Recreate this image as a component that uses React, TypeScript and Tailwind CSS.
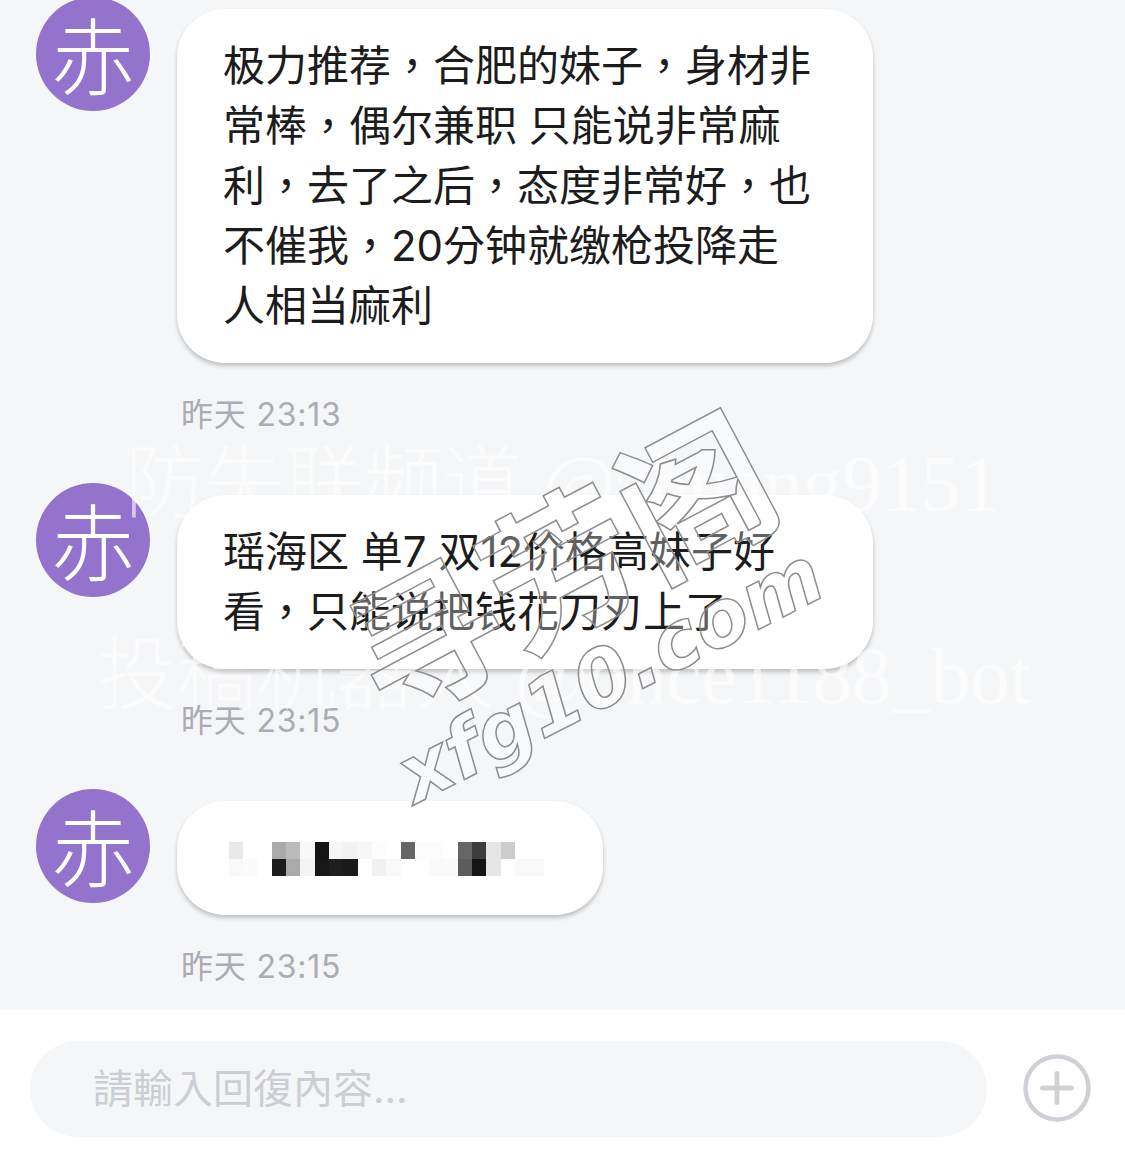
const mosaicTop = ["#e9e9e9","#fff","#fff","#aaa","#bbb","#f8f8f8","#151515","#f6f6f6","#f2f2f2","#f7f7f7","#fdfdfd","#fff","#666","#fcfcfc","#fcfcfc","#fff","#666","#3c3c3c","#e6e6e6","#ccc","#fff","#fff"];
const mosaicBottom = ["#f9f9f9","#fbfbfb","#fff","#1c1c1c","#aaa","#f4f4f4","#171717","#1e1e1e","#1a1a1a","#fff","#f1f1f1","#f9f9f9","#fff","#fff","#fafafa","#fafafa","#5c5c5c","#141414","#e6e6e6","#fff","#f9f9f9","#f9f9f9"];

function Avatar() {
  return (
    <div className="w-[114px] h-[114px] shrink-0 rounded-full bg-[#9373cc] text-white flex items-center justify-center text-[84px] leading-none font-light pt-[10px]">
      赤
    </div>
  );
}

function Message({ time, children, className }: { time: string; children: React.ReactNode; className: string }) {
  return (
    <div className="flex pl-9 gap-[27px]">
      <Avatar />
      <div className="flex flex-col items-start pt-3">
        <div className={`bg-white rounded-[48px] shadow-[0_3px_4px_rgba(0,0,0,0.22)] text-[42px] leading-[60px] text-[#1c1c1c] ${className}`}>
          {children}
        </div>
        <div className="pl-1 mt-[32px] -mb-[2px] text-[32px] leading-[40px] tracking-[0.8px] text-[#aaadb3]">{time}</div>
      </div>
    </div>
  );
}

export default function App() {
  return (
    <div className="relative w-[1125px] h-[1167px] overflow-hidden bg-[#f5f6f8] flex flex-col font-['Inter','Noto_Sans_CJK_TC','Noto_Sans_CJK_SC',sans-serif]">
      <div className="flex-1 flex flex-col gap-[50px] -mt-[3px]">
        <Message time="昨天 23:13" className="w-[696px] pl-[46px] pr-[60px] pt-[27px] pb-[27px]">
          极力推荐，合肥的妹子，身材非常棒，偶尔兼职 只能说非常麻利，去了之后，态度非常好，也不催我，20分钟就缴枪投降走人相当麻利
        </Message>
        <Message time="昨天 23:15" className="w-[696px] pl-[46px] pr-[60px] pt-[27px] pb-[27px]">
          瑶海区 单7 双12价格高妹子好看，只能说把钱花刀刃上了
        </Message>
        <Message time="昨天 23:15" className="w-[426px] pl-[52px] pt-[41px] pb-[39px]">
          <div className="flex flex-col">
            {[mosaicTop, mosaicBottom].map((row, r) => (
              <div key={r} className="flex h-[17px]">
                {row.map((c, i) => (
                  <div key={i} className="w-[14.3px] h-full" style={{ backgroundColor: c }} />
                ))}
              </div>
            ))}
          </div>
        </Message>
      </div>

      {/* Reply bar */}
      <div className="h-[157px] shrink-0 bg-white flex items-center pl-[30px] pr-[34px] justify-between">
        <div className="w-[957px] h-[96px] rounded-[48px] bg-[#f5f6f8] flex items-center pl-[63px] text-[40px] text-[#ccced3]">
          請輸入回復內容...
        </div>
        <svg className="mb-[2px]" width="68" height="68" viewBox="0 0 68 68" fill="none" stroke="#cfd1d6" strokeLinecap="round">
          <circle cx="34" cy="34" r="31.5" strokeWidth="4.5" />
          <path d="M34 19.5v29M19.5 34h29" strokeWidth="5" />
        </svg>
      </div>

      {/* Watermarks */}
      <div className="absolute left-[125px] top-[438px] text-[80px] leading-[92px] tracking-[-0.6px] whitespace-nowrap text-white/60 font-['Liberation_Serif','Noto_Sans_CJK_SC',serif] font-light">
        防失联频道 @zhuang9151
      </div>
      <div className="absolute left-[97px] top-[630px] text-[80px] leading-[92px] tracking-[-0.5px] whitespace-nowrap text-white/60 font-['Liberation_Serif','Noto_Sans_CJK_SC',serif] font-light">
        投稿机器人 @once1188_bot
      </div>
      <div className="absolute left-[307px] top-[484px] w-[500px] text-center -rotate-[28deg] text-[152px] leading-none whitespace-nowrap font-bold text-white/30 font-['Noto_Sans_CJK_SC',sans-serif] [-webkit-text-stroke:1.5px_#8d8d8d]">
        寻芳阁
      </div>
      <div className="absolute left-[378px] top-[637px] w-[460px] text-center -rotate-[27deg] text-[79px] leading-none whitespace-nowrap italic font-bold text-white/30 font-['DejaVu_Sans',sans-serif] [-webkit-text-stroke:1.5px_#8d8d8d]">
        xfg10.com
      </div>
    </div>
  );
}
